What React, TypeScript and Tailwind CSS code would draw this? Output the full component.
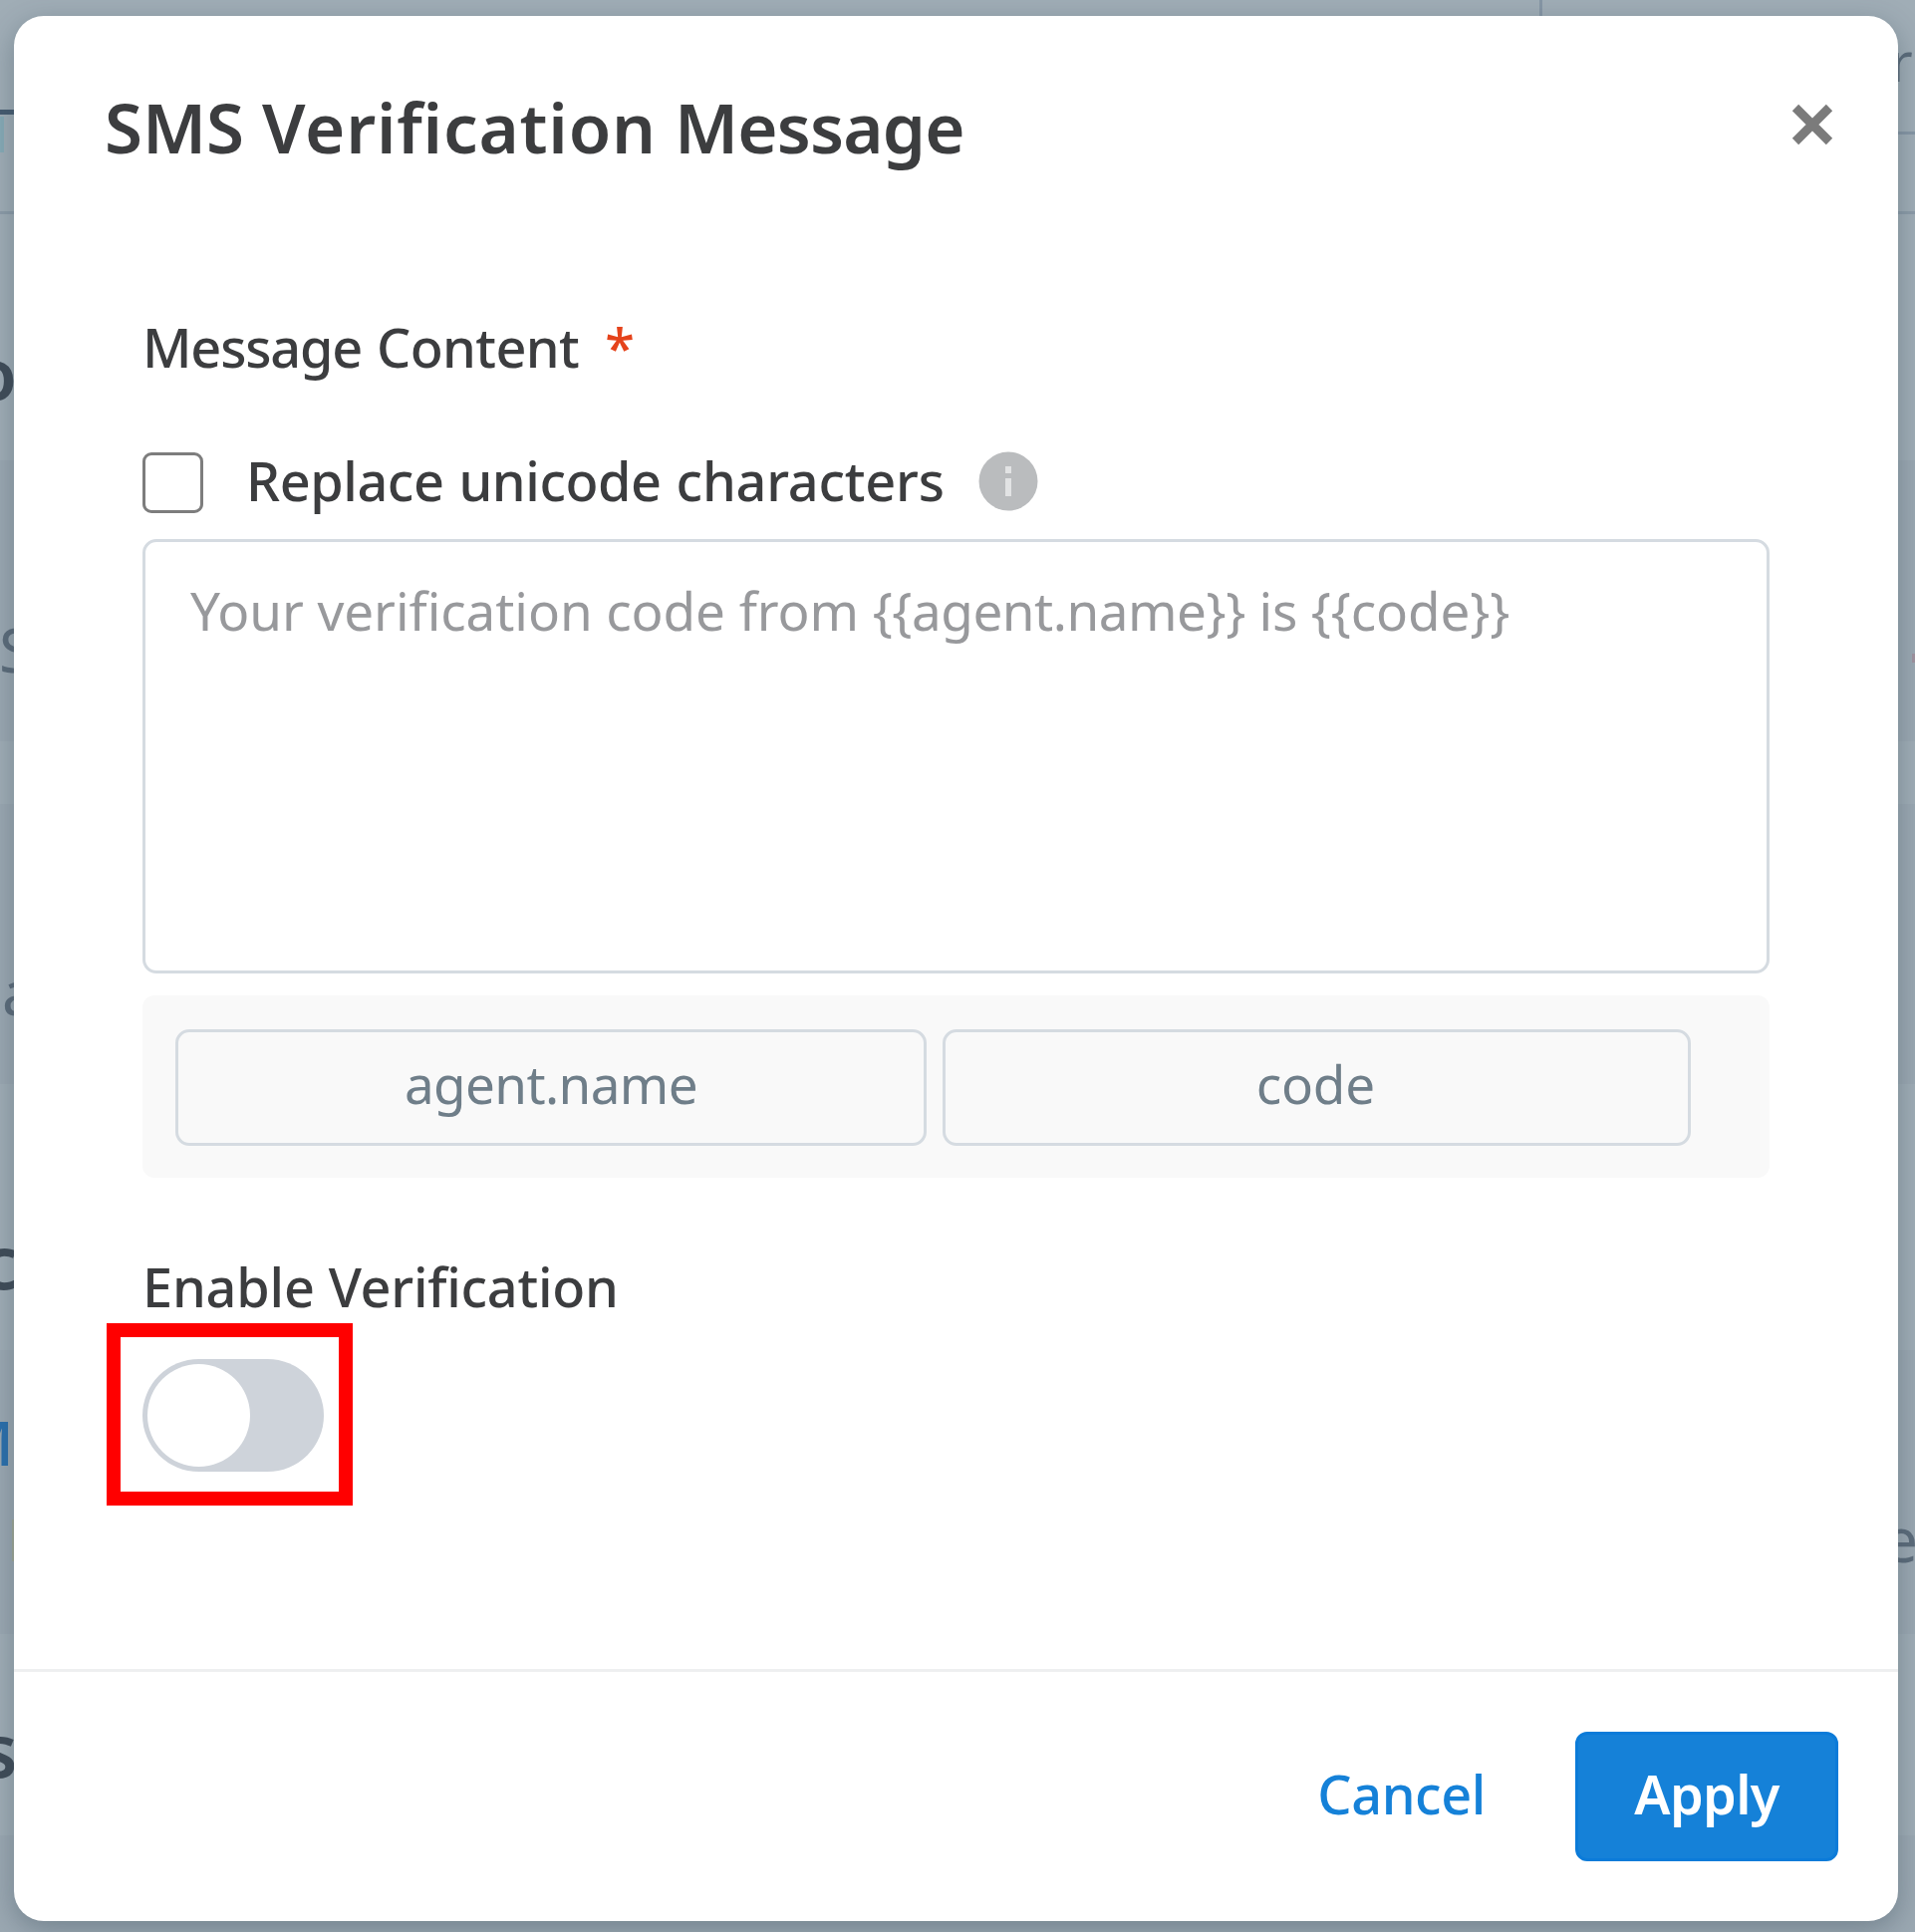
import type { ReactNode } from "react";

function Backdrop() {
  return (
    <div className="absolute inset-0 overflow-hidden bg-[#a0adb6] leading-none text-[#5c6b7a]">
      {/* page rows */}
      <div className="absolute inset-x-0 top-[462px] h-[282px] bg-[#9ba8b2]" />
      <div className="absolute inset-x-0 top-[807px] h-[281px] bg-[#9ba8b2]" />
      <div className="absolute inset-x-0 top-[1355px] h-[285px] bg-[#9ba8b2]" />
      <div className="absolute inset-x-0 top-[1842px] bottom-0 bg-[#9ba8b2]" />

      {/* dividers */}
      <div className="absolute left-[1545px] top-0 h-5 w-[3px] bg-[#8696a5]" />
      <div className="absolute left-0 top-[110px] h-[5px] w-5 bg-[#465b70]" />
      <div className="absolute left-0 top-[117px] h-9 w-1 bg-[#86aab6]" />
      <div className="absolute left-0 top-[212px] h-[3px] w-5 bg-[#8c9ba8]" />
      <div className="absolute right-0 top-[132px] h-[3px] w-6 bg-[#8696a5]" />
      <div className="absolute right-0 top-[212px] h-[3px] w-6 bg-[#8c9ba8]" />
      <div className="absolute left-3 top-[1525px] h-[42px] w-[3px] bg-[#a1a997]" />
      <div className="absolute right-0 top-[656px] h-[9px] w-[3px] bg-[#a0929f]" />

      {/* clipped page text */}
      <span className="absolute -left-[28px] top-[337px] text-[73px] font-semibold text-[#3f4b57]">o</span>
      <span className="absolute -left-px top-[620px] text-[62px]">S</span>
      <span className="absolute left-0.5 top-[964px] text-[62px]">a</span>
      <span className="absolute -left-[19px] top-[1229px] text-[74px] font-semibold text-[#3f4b57]">c</span>
      <span className="absolute -left-[43px] top-[1416px] text-[62px] font-medium text-[#2a6fac]">M</span>
      <span className="absolute -left-[19px] top-[1719px] text-[74px] font-semibold text-[#3f4b57]">s</span>
      <span className="absolute left-[1897px] top-[33px] text-[55px]">r</span>
      <span className="absolute left-[1890px] top-[1513px] text-[62px]">e</span>
    </div>
  );
}

function TokenButton({ className, children }: { className: string; children: ReactNode }) {
  return (
    <button
      className={`flex h-[116.5px] items-center justify-center rounded-[14px] border-[3px] border-[#d5dbe1] pb-[7px] text-[#6f7e89] ${className}`}
    >
      {children}
    </button>
  );
}

export default function App() {
  return (
    <div className="relative h-[1939px] w-[1922px] overflow-hidden font-['Noto_Sans',sans-serif] text-[54px] leading-[72px] text-[#3c3d3f]">
      <Backdrop />

      <div
        role="dialog"
        className="relative ml-[14px] mt-4 flex h-[1912px] w-[1891px] flex-col rounded-[30px] bg-white shadow-[0_8px_28px_rgba(50,70,85,0.38)]"
      >
        <header className="flex h-[222px] items-center justify-between pl-[91px] pr-[64px]">
          <h2 className="flex gap-[18px] text-[69px] font-semibold">
            <span>SMS</span>
            <span className="tracking-[0.8px]">Verification</span>
            <span className="tracking-[-0.8px]">Message</span>
          </h2>
          <button aria-label="Close" className="mb-[5px]">
            <svg width="44" height="44" viewBox="0 0 44 44" stroke="#7b7b7b" strokeWidth="9">
              <path d="M5 5 39 39M39 5 5 39" />
            </svg>
          </button>
        </header>

        <main className="flex flex-1 flex-col pl-[129px] pr-[129px] pt-[74px]">
          <div className="flex font-medium">
            <span className="tracking-[-1.2px]">Message</span>
            <span className="ml-[15px] tracking-[-0.6px]">Content</span>
            <span className="ml-[26px] text-[#e5431b]">*</span>
          </div>

          <div className="mt-16 flex h-[72px] items-center font-medium">
            <span role="checkbox" aria-checked="false" className="size-[61px] rounded-[9px] border-[3.5px] border-[#7d7d7d]" />
            <div className="ml-[43px] flex gap-[15px] pb-[4px]">
              <span className="tracking-[-0.45px]">Replace</span>
              <span className="tracking-[-0.45px]">unicode</span>
              <span className="tracking-[-0.2px]">characters</span>
            </div>
            <svg className="ml-[34px] mb-[3px]" width="60" height="60" viewBox="0 0 60 60">
              <circle cx="30" cy="30" r="29.5" fill="#babcbe" />
              <path d="M27 15h6v7h-6zM27 27h6v18h-6z" fill="#e2e3e4" />
            </svg>
          </div>

          <div className="mt-[21px] h-[436px] rounded-[14px] border-[3px] border-[#d5dbe1] pl-[45px] pt-[33px] text-[53px] text-[#98999c]">
            <span className="tracking-[-0.08px]">{"Your verification code from "}</span>
            <span className="tracking-[-0.48px]">{"{{agent.name}}"}</span>
            <span className="tracking-[-0.15px]">{" is {{code}}"}</span>
          </div>

          <div className="mt-[22px] flex h-[183px] items-center gap-4 rounded-xl bg-[#f9f9f9] pl-[33px] pt-[2px]">
            <TokenButton className="w-[754px] text-[53px] tracking-[-0.6px]">agent.name</TokenButton>
            <TokenButton className="w-[750.5px] pr-0.5 text-[53px] tracking-[-0.2px]">code</TokenButton>
          </div>

          <div className="mt-[73px] flex gap-[14px] font-medium">
            <span className="tracking-[-0.2px]">Enable</span>
            <span className="tracking-[-0.25px]">Verification</span>
          </div>

          <div role="switch" aria-checked="false" className="relative mt-[37px] h-[113px] w-[182px] rounded-full bg-[#ced3da] p-[5px]">
            <div className="size-[103px] rounded-full bg-white" />
            {/* highlight frame around the switch */}
            <div className="absolute -left-9 -top-9 h-[183px] w-[247px] border-[14px] border-[#ff0000]" />
          </div>
        </main>

        <footer className="flex h-[253px] items-center justify-end gap-[90px] border-t-[3px] border-[#eeeff0] pr-[60px]">
          <button className="pb-[7px] font-medium tracking-[-0.4px] text-[#1581d8]">Cancel</button>
          <button className="flex h-[130px] w-[264px] items-center justify-center rounded-xl border-[3px] border-[#0b7bd9] bg-[#1581d8] pb-[7px] font-semibold tracking-[-0.7px] text-white">
            Apply
          </button>
        </footer>
      </div>
    </div>
  );
}
